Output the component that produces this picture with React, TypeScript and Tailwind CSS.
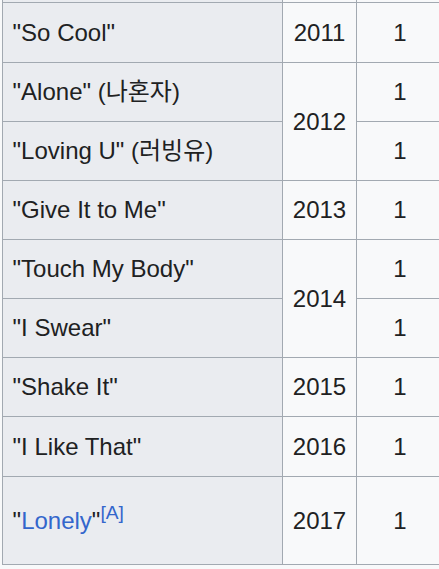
import React from "react";

type Row = {
  title: React.ReactNode;
  year?: string;
  span?: number;
  h: string;
};

const th = "border border-[#a2a9b1] bg-[#eaecf0] px-[9.6px] text-left font-normal align-middle";
const td = "border border-[#a2a9b1] bg-[#f8f9fa] px-[9.6px] text-center align-middle";

export default function App() {
  const rows: Row[] = [
    { title: <>"So Cool"</>, year: "2011", h: "h-[60px]" },
    { title: <>"Alone" (나혼자)</>, year: "2012", span: 2, h: "h-[59px]" },
    { title: <>"Loving U" (러빙유)</>, h: "h-[59px]" },
    { title: <>"Give It to Me"</>, year: "2013", h: "h-[59px]" },
    { title: <>"Touch My Body"</>, year: "2014", span: 2, h: "h-[59px]" },
    { title: <>"I Swear"</>, h: "h-[59px]" },
    { title: <>"Shake It"</>, year: "2015", h: "h-[59px]" },
    { title: <>"I Like That"</>, year: "2016", h: "h-[60px]" },
    {
      title: (
        <>
          "<a href="#" className="text-[#3366cc]">Lonely</a>"
          <sup className="text-[0.8em] text-[#3366cc] leading-none">
            <a href="#">[A]</a>
          </sup>
        </>
      ),
      year: "2017",
      h: "h-[88px]",
    },
  ];

  return (
    <div
      className="w-[439px] h-[569px] overflow-hidden bg-[#f8f9fa] pl-[2px] text-[24px] text-[#202122]"
      style={{ fontFamily: '"Liberation Sans", Arial, "Noto Sans CJK KR", sans-serif' }}
    >
      <table className="-mt-[58px] w-[441px] table-fixed border-collapse">
        <colgroup>
          <col className="w-[280px]" />
          <col className="w-[74px]" />
          <col className="w-[87px]" />
        </colgroup>
        <tbody>
          {/* row above, cut off by the crop */}
          <tr className="h-[60px]">
            <th className={th}></th>
            <td className={td}></td>
            <td className={td}></td>
          </tr>
          {rows.map((r, i) => (
            <tr key={i} className={r.h}>
              <th scope="row" className={th}>
                {r.title}
              </th>
              {r.year && (
                <td className={td} rowSpan={r.span ?? 1}>
                  {r.year}
                </td>
              )}
              <td className={td}>1</td>
            </tr>
          ))}
        </tbody>
      </table>
    </div>
  );
}
